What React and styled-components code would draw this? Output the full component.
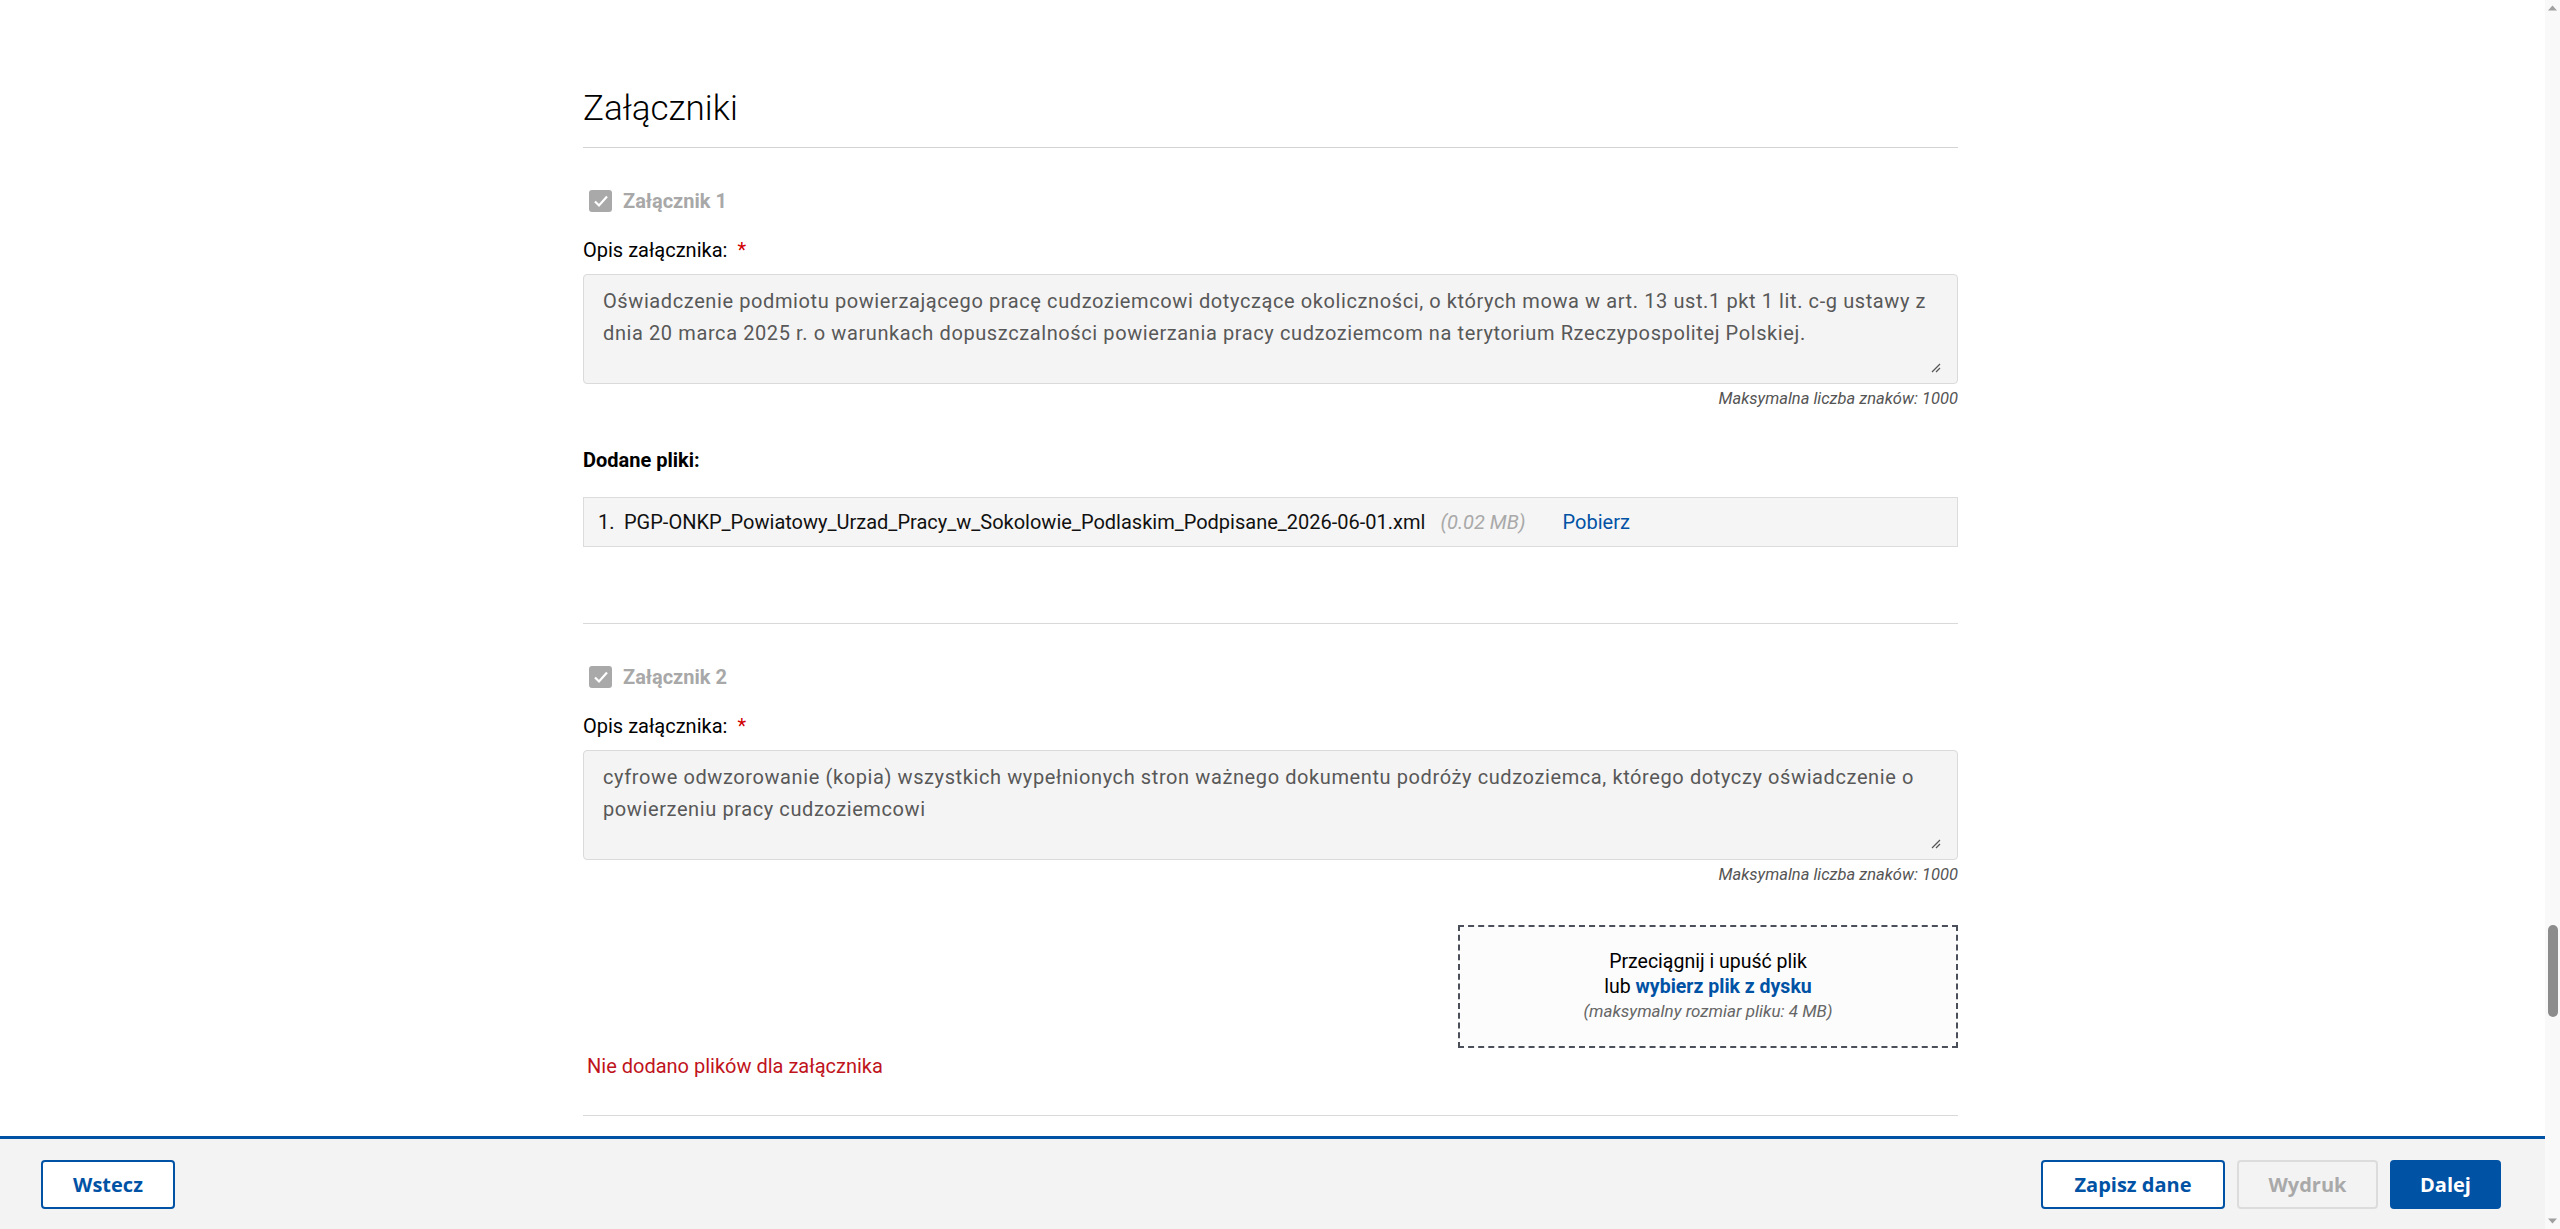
import React from 'react';
import styled, { createGlobalStyle, css } from 'styled-components';

const GlobalStyle = createGlobalStyle`
  html, body {
    margin: 0;
    padding: 0;
    height: 100%;
    overflow: hidden;
    background: #fff;
  }
  body {
    font-family: Roboto, "Liberation Sans", sans-serif;
    color: #000;
  }
  * { box-sizing: border-box; }
`;

const blue = '#0052a5';

const Page = styled.div`
  display: flex;
  height: 100vh;
`;

const Main = styled.div`
  flex: 1;
  display: flex;
  flex-direction: column;
  min-width: 0;
`;

const Scroller = styled.div`
  flex: 1;
  overflow: hidden;
  padding-right: 4px;
`;

const Column = styled.div`
  width: 1375px;
  margin: 0 auto;
  padding-top: 88px;
`;

const Title = styled.h2`
  margin: 0;
  font-size: 35px;
  font-weight: 300;
  line-height: 42px;
  padding-bottom: 17px;
  border-bottom: 1px solid #d4d4d4;
`;

const Section = styled.section`
  padding: 38px 0 76px;

  ${props => props.divided && css`
    border-top: 1px solid #d9d9d9;
  `}

  ${props => props.last && css`
    padding-bottom: 37px;
    border-bottom: 1px solid #d9d9d9;
  `}
`;

const CheckRow = styled.div`
  display: flex;
  align-items: center;
  height: 30px;
  padding-left: 6px;
  gap: 11px;
`;

const CheckBox = styled.span`
  width: 23px;
  height: 22px;
  border-radius: 3px;
  background: #a9a9a9;
  display: flex;
  align-items: center;
  justify-content: center;
`;

const CheckLabel = styled.span`
  font-size: 20px;
  font-weight: 700;
  color: #a8a8a8;
`;

const FieldLabel = styled.div`
  margin-top: 22px;
  font-size: 20px;
  line-height: 24px;
`;

const Required = styled.span`
  color: #d10000;
  margin-left: 10px;
`;

const TextArea = styled.div`
  position: relative;
  margin-top: 12px;
  height: 110px;
  padding: 10px 14px 10px 19px;
  background: #f4f4f4;
  border: 1px solid #dadada;
  border-radius: 4px;
  font-size: 20px;
  line-height: 32px;
  letter-spacing: 0.6px;
  color: #585858;
`;

const Grip = styled.svg`
  position: absolute;
  right: 16px;
  bottom: 10px;
`;

const Counter = styled.div`
  margin-top: 5px;
  text-align: right;
  font-size: 16.5px;
  line-height: 20px;
  font-style: italic;
  color: #555;
`;

const SubHeading = styled.div`
  margin-top: 39px;
  font-size: 20px;
  line-height: 24px;
  font-weight: 700;
`;

const FileRow = styled.div`
  margin-top: 25px;
  height: 50px;
  display: flex;
  align-items: center;
  padding: 0 14px;
  background: #f5f5f5;
  border: 1px solid #dcdcdc;
  font-size: 20px;
  color: #111;
`;

const FileIndex = styled.span`
  width: 26px;
`;

const FileSize = styled.span`
  margin-left: 15px;
  font-style: italic;
  color: #a9a9a9;
`;

const FileLink = styled.a`
  margin-left: 37px;
  color: ${blue};
  text-decoration: none;
`;

const DropArea = styled.div`
  margin-top: 40px;
  display: flex;
  justify-content: flex-end;
`;

const DropZone = styled.div`
  width: 500px;
  height: 123px;
  border: 2px dashed #4a4f5a;
  background: #fcfcfc;
  display: flex;
  flex-direction: column;
  align-items: center;
  justify-content: center;
  text-align: center;
  font-size: 19.5px;
  line-height: 25px;
`;

const DropLink = styled.span`
  color: ${blue};
  font-weight: 700;
`;

const DropHint = styled.div`
  font-size: 17px;
  font-style: italic;
  color: #666;
`;

const ErrorText = styled.div`
  margin-top: 6px;
  padding-left: 4px;
  font-size: 20px;
  line-height: 24px;
  color: #c0141c;
`;

const Footer = styled.footer`
  height: 93px;
  border-top: 3px solid ${blue};
  background: #f3f3f3;
  display: flex;
  align-items: center;
  padding: 0 44px 0 41px;
`;

const Spacer = styled.div`
  flex: 1;
`;

const Buttons = styled.div`
  display: flex;
  gap: 12px;
`;

const Button = styled.button`
  height: 49px;
  min-width: ${props => props.w || 110}px;
  padding: 0 20px;
  border-radius: 4px;
  border: 2px solid ${blue};
  background: #fff;
  color: ${blue};
  font-family: "Open Sans", Roboto, sans-serif;
  font-size: 20px;
  font-weight: 700;
  cursor: pointer;

  ${props => props.primary && css`
    background: ${blue};
    color: #fff;
  `}

  ${props => props.disabled && css`
    background: #f3f3f3;
    border-color: #dcdcdc;
    color: #a9a9a9;
    cursor: default;
  `}
`;

const ScrollTrack = styled.div`
  width: 15px;
  background: #f9f9f9;
  display: flex;
  flex-direction: column;
  align-items: center;
`;

const Arrow = styled.div`
  height: 16px;
  display: flex;
  align-items: center;
  justify-content: center;
`;

const ThumbArea = styled.div`
  flex: 1;
  width: 100%;
  display: flex;
  justify-content: center;
`;

const Thumb = styled.div`
  margin-top: 909px;
  width: 10px;
  height: 92px;
  border-radius: 5px;
  background: #8c8c8c;
`;

const Check = () => (
  <CheckBox>
    <svg width="18" height="18" viewBox="0 0 18 18">
      <path d="M3 9.5 L7 13.5 L15 4.5" fill="none" stroke="#fff" strokeWidth="2.2" />
    </svg>
  </CheckBox>
);

const ResizeGrip = () => (
  <Grip width="10" height="10" viewBox="0 0 10 10">
    <path d="M1 9 L9 1 M5 9 L9 5" stroke="#555" strokeWidth="1.2" />
  </Grip>
);

const attachments = [
  {
    name: 'Załącznik 1',
    text: 'Oświadczenie podmiotu powierzającego pracę cudzoziemcowi dotyczące okoliczności, o których mowa w art. 13 ust.1 pkt 1 lit. c-g ustawy z dnia 20 marca 2025 r. o warunkach dopuszczalności powierzania pracy cudzoziemcom na terytorium Rzeczypospolitej Polskiej.',
    files: [{ name: 'PGP-ONKP_Powiatowy_Urzad_Pracy_w_Sokolowie_Podlaskim_Podpisane_2026-06-01.xml', size: '0.02 MB' }],
  },
  {
    name: 'Załącznik 2',
    text: 'cyfrowe odwzorowanie (kopia) wszystkich wypełnionych stron ważnego dokumentu podróży cudzoziemca, którego dotyczy oświadczenie o powierzeniu pracy cudzoziemcowi',
    files: [],
  },
];

const App = () => (
  <Page>
    <GlobalStyle />
    <Main>
      <Scroller>
        <Column>
          <Title>Załączniki</Title>

          {attachments.map( ( item, i ) => (
            <Section key={item.name} divided={i > 0} last={i === attachments.length - 1}>
              <CheckRow>
                <Check />
                <CheckLabel>{item.name}</CheckLabel>
              </CheckRow>

              <FieldLabel>
                Opis załącznika:<Required>*</Required>
              </FieldLabel>
              <TextArea>
                {item.text}
                <ResizeGrip />
              </TextArea>
              <Counter>Maksymalna liczba znaków: 1000</Counter>

              {item.files.length > 0 ? (
                <>
                  <SubHeading>Dodane pliki:</SubHeading>
                  {item.files.map( ( file, n ) => (
                    <FileRow key={file.name}>
                      <FileIndex>{n + 1}.</FileIndex>
                      <span>{file.name}</span>
                      <FileSize>({file.size})</FileSize>
                      <FileLink href="#">Pobierz</FileLink>
                    </FileRow>
                  ))}
                </>
              ) : (
                <>
                  <DropArea>
                    <DropZone>
                      <div>Przeciągnij i upuść plik</div>
                      <div>lub <DropLink>wybierz plik z dysku</DropLink></div>
                      <DropHint>(maksymalny rozmiar pliku: 4 MB)</DropHint>
                    </DropZone>
                  </DropArea>
                  <ErrorText>Nie dodano plików dla załącznika</ErrorText>
                </>
              )}
            </Section>
          ))}
        </Column>
      </Scroller>

      <Footer>
        <Button w={134}>Wstecz</Button>
        <Spacer />
        <Buttons>
          <Button w={184}>Zapisz dane</Button>
          <Button w={141} disabled>Wydruk</Button>
          <Button w={111} primary>Dalej</Button>
        </Buttons>
      </Footer>
    </Main>

    <ScrollTrack>
      <Arrow>
        <svg width="9" height="6" viewBox="0 0 9 6"><path d="M0 5.5 L4.5 0.5 L9 5.5 Z" fill="#a0a0a0" /></svg>
      </Arrow>
      <ThumbArea>
        <Thumb />
      </ThumbArea>
      <Arrow>
        <svg width="9" height="6" viewBox="0 0 9 6"><path d="M0 0.5 L4.5 5.5 L9 0.5 Z" fill="#a0a0a0" /></svg>
      </Arrow>
    </ScrollTrack>
  </Page>
);

export default App;
